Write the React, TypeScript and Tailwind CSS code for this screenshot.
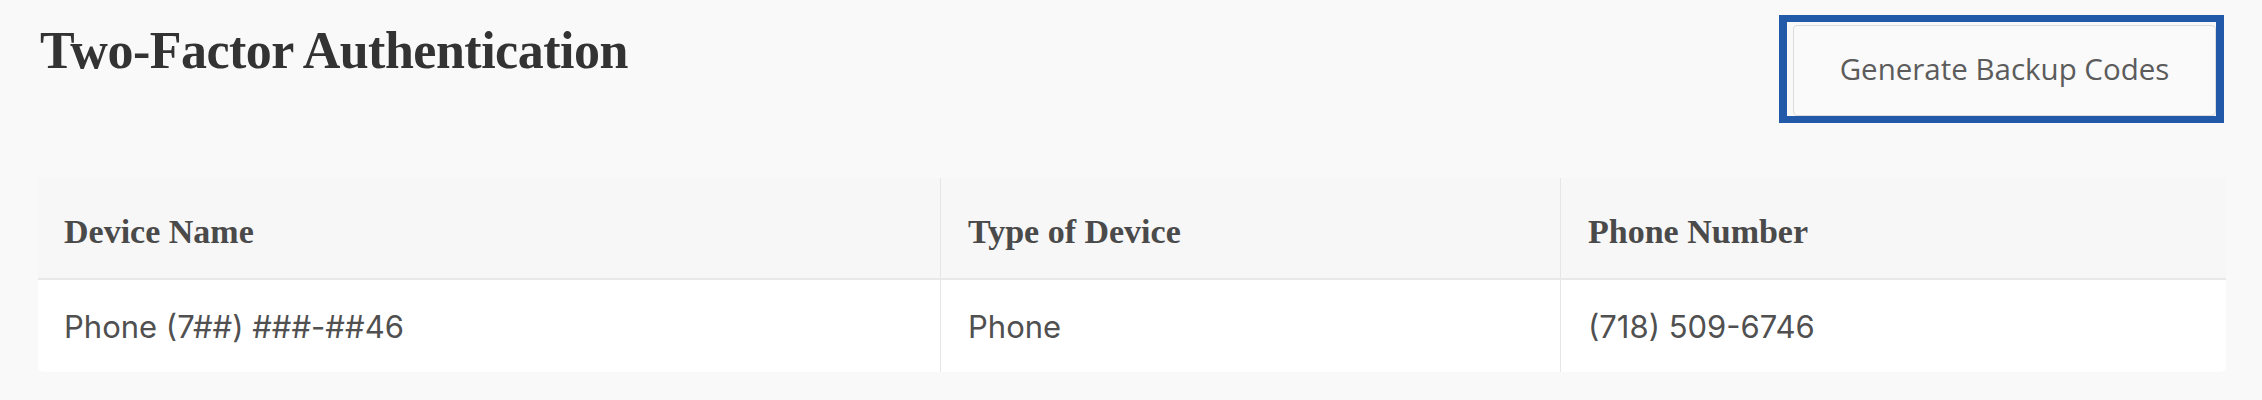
import React from 'react';

interface Device {
  name: string;
  type: string;
  phone: string;
}

const devices: Device[] = [
  { name: 'Phone (7##) ###-##46', type: 'Phone', phone: '(718) 509-6746' },
];

const serif = "font-['Liberation_Serif',serif]";
const sans = "font-['Inter','Liberation_Sans',sans-serif]";

export default function App() {
  return (
    <div className="min-h-[400px] bg-[#f9f9f9] pl-[38px] pr-[36px] pt-[15px]">
      {/* Title + action */}
      <div className="flex items-start justify-between">
        <h1 className={`${serif} mt-[10px] pl-[2px] text-[52px] leading-none font-bold tracking-[-0.5px] text-[#333333]`}>
          Two-Factor Authentication
        </h1>
        <div className="mr-[2px] border-x-[8px] border-y-[7px] border-[#2359a9] pl-[6px] pt-[3px]">
          <button
            type="button"
            className="flex h-[91px] w-[423px] items-center justify-center rounded-[4px] border border-[#dcdcdc] bg-[#fafafa] pb-[2px] font-['Open_Sans',sans-serif] text-[29.5px] text-[#5c5c5c]"
          >
            Generate Backup Codes
          </button>
        </div>
      </div>

      {/* Devices table */}
      <div className="mt-[55px] overflow-hidden rounded-[6px]">
        <div className="grid grid-cols-[902px_620px_1fr] border-b-2 border-[#e8e8e8] bg-[#f7f7f7]">
          <div className={`${serif} flex h-[100px] items-center pl-[26px] pt-[7px] text-[34px] font-bold text-[#4a4a4a]`}>
            Device Name
          </div>
          <div className={`${serif} flex h-[100px] items-center border-l border-[#e6e6e6] pl-[27px] pt-[7px] text-[34px] font-bold text-[#4a4a4a]`}>
            Type of Device
          </div>
          <div className={`${serif} flex h-[100px] items-center border-l border-[#e6e6e6] pl-[27px] pt-[7px] text-[34px] font-bold text-[#4a4a4a]`}>
            Phone Number
          </div>
        </div>
        {devices.map((d) => (
          <div key={d.phone} className={`${sans} grid grid-cols-[902px_620px_1fr] bg-white text-[31px] text-[#505050]`}>
            <div className="flex h-[92px] items-center pl-[26px] pt-[3px]">{d.name}</div>
            <div className="flex h-[92px] items-center border-l border-[#e6e6e6] pl-[27px] pt-[3px]">{d.type}</div>
            <div className="flex h-[92px] items-center border-l border-[#e6e6e6] pl-[27px] pt-[3px]">{d.phone}</div>
          </div>
        ))}
      </div>
    </div>
  );
}
